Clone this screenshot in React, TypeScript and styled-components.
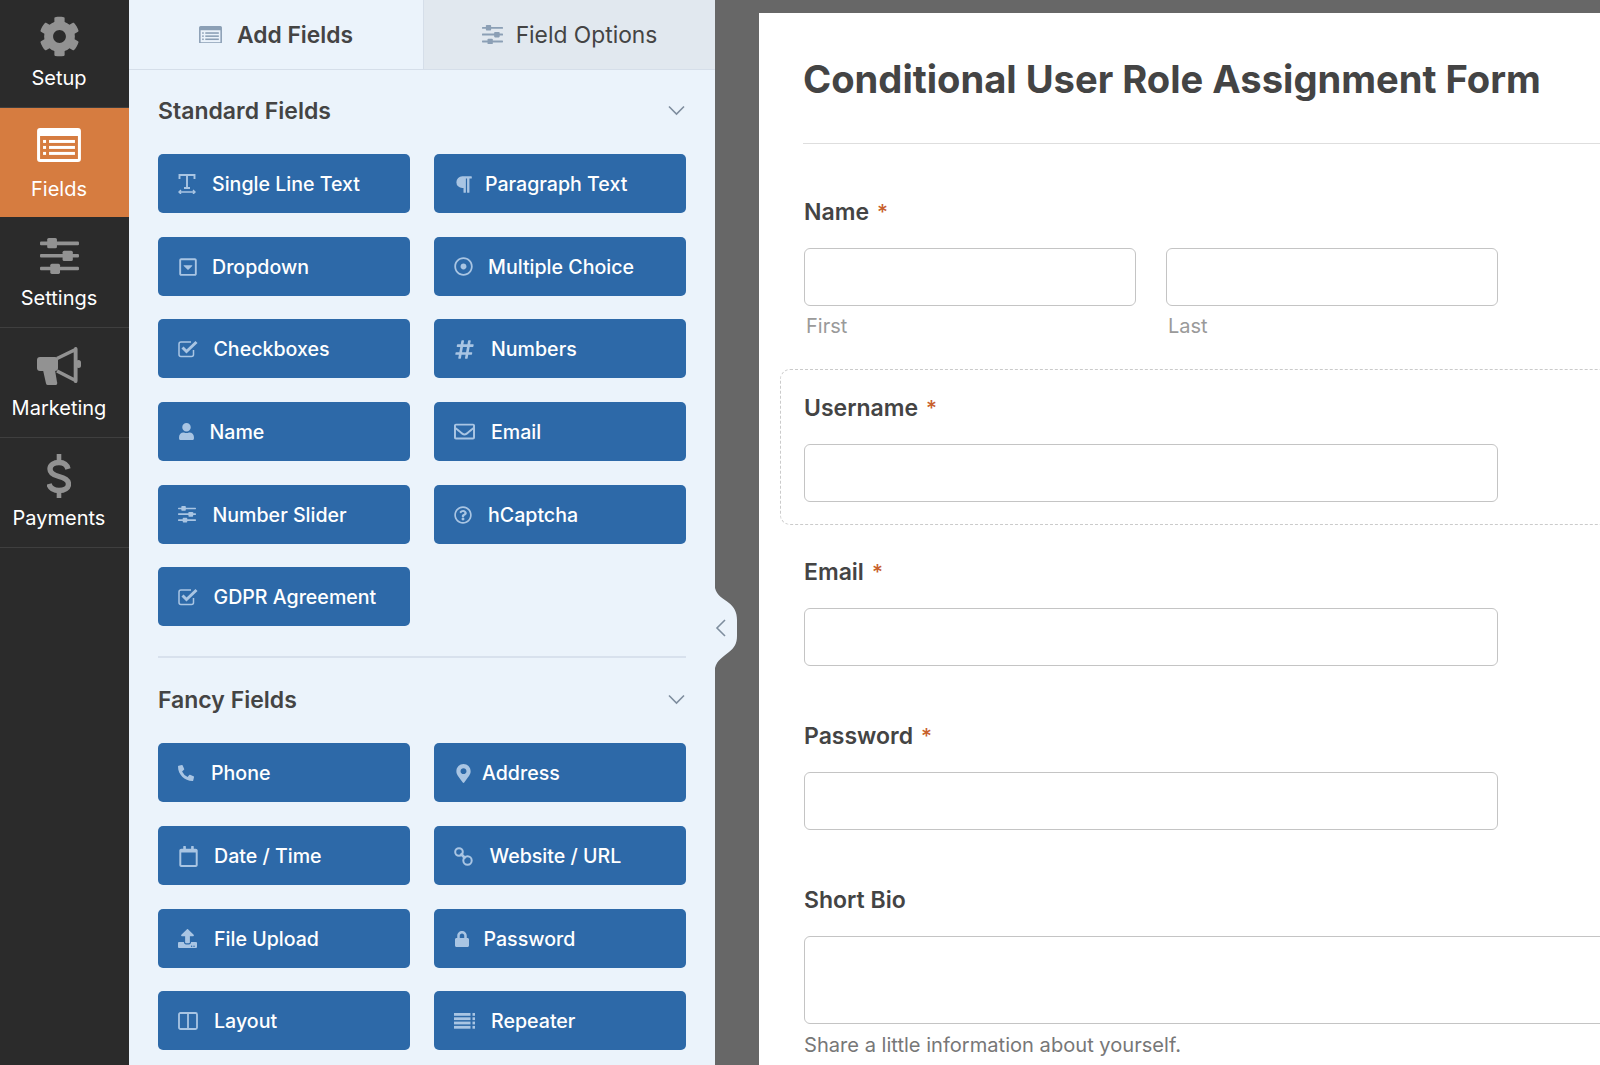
import React from 'react';
import styled, { createGlobalStyle } from 'styled-components';
import {
  FaCog,
  FaHashtag,
  FaLock,
  FaMapMarkerAlt,
  FaParagraph,
  FaPhoneAlt,
  FaRegCalendar,
  FaRegCaretSquareDown,
  FaRegDotCircle,
  FaRegEnvelope,
  FaRegQuestionCircle,
  FaUpload,
  FaUser,
} from 'react-icons/fa';

const GlobalStyle = createGlobalStyle`
  html, body {
    margin: 0;
    height: 100%;
    overflow: hidden;
    font-family: Inter, "Liberation Sans", sans-serif;
  }
  * { box-sizing: border-box; }
`;

const Page = styled.div`
  display: flex;
  width: 1600px;
  height: 1065px;
  overflow: hidden;
`;

const Sidebar = styled.nav`
  flex: 0 0 129px;
  background: #2b2b2b;
`;

const NavItem = styled.div<{ $active?: boolean; $h: number }>`
  display: flex;
  flex-direction: column;
  align-items: center;
  justify-content: flex-end;
  height: ${p => p.$h}px;
  padding: 0 11px ${p => (p.$active ? 15.5 : 17)}px 0;
  gap: ${p => (p.$active ? 9.5 : 8)}px;
  background: ${p => (p.$active ? '#d67c40' : 'transparent')};
  border-bottom: 1px solid ${p => (p.$active ? 'transparent' : '#3f3f3f')};
  color: ${p => (p.$active ? '#fff' : '#929292')};
`;

const NavIconBox = styled.span`
  display: flex;
  align-items: center;
  justify-content: center;
  height: 44px;
`;

const NavLabel = styled.span`
  color: #fff;
  font-size: 20px;
  line-height: 24px;
`;

const Panel = styled.section`
  flex: 0 0 586px;
  background: #ebf3fb;
`;

const Tabs = styled.div`
  display: flex;
  height: 70px;
  border-bottom: 1px solid #d5dee9;
`;

const Tab = styled.div<{ $active?: boolean }>`
  display: flex;
  align-items: center;
  justify-content: center;
  gap: ${p => (p.$active ? '15px' : '13px')};
  flex: 0 0 ${p => (p.$active ? '294px' : '292px')};
  background: ${p => (p.$active ? 'transparent' : '#e1e8ef')};
  border-left: ${p => (p.$active ? 'none' : '1px solid #d5dee9')};
  color: #444;
  font-size: 22.8px;
  font-weight: ${p => (p.$active ? 600 : 400)};
  & > svg { color: #8b9fb5; }
`;

const Section = styled.div<{ $top: number }>`
  padding: ${p => p.$top}px 29px 0;
`;

const SectionHead = styled.div`
  display: flex;
  align-items: center;
  justify-content: space-between;
  height: 24px;
  margin-bottom: 31px;
  color: #444;
  font-size: 23px;
  font-weight: 600;
  & > svg { color: #7e8d9e; margin: -2px 1px 0 0; }
`;

const FieldGrid = styled.div`
  display: grid;
  grid-template-columns: 252px 252px;
  grid-auto-rows: 59.15px;
  column-gap: 24px;
  row-gap: 23.5px;
`;

const FieldButton = styled.div`
  display: flex;
  align-items: center;
  padding: 1px 0 0 20px;
  background: #2d69a8;
  border-radius: 5px;
  color: #fff;
  font-size: 19.6px;
  font-weight: 500;
`;

const FieldIconSlot = styled.span<{ $slot: number }>`
  display: flex;
  align-items: center;
  flex: 0 0 ${p => p.$slot}px;
  color: #a9c5e3;
`;

const Divider = styled.div`
  height: 2px;
  margin-top: 30px;
  background: #d8e1ed;
`;

const Canvas = styled.main`
  position: relative;
  flex: 1;
  min-width: 0;
  padding: 13px 0 0 44px;
  background: #676767;
  overflow: hidden;
`;

const Toggle = styled.div`
  position: absolute;
  left: 0;
  top: 588px;
  width: 22px;
  height: 80px;
  color: #ebf3fb;
  & > svg { display: block; }
`;

const ToggleChevron = styled.span`
  position: absolute;
  left: 0;
  top: 31px;
  color: #7e8d9e;
  & > svg { display: block; }
`;

const Form = styled.div`
  width: 1100px;
  height: 1100px;
  padding: 0 0 0 44px;
  background: #fff;
`;

const FormTitle = styled.h1`
  height: 88px;
  margin: 0;
  padding-top: 41px;
  color: #444;
  font-size: 38.15px;
  font-weight: 700;
  line-height: 50px;
  white-space: nowrap;
`;

const FormRule = styled.div`
  height: 1px;
  margin: 42px 0 29px;
  background: #dedede;
`;

const Block = styled.div<{ $selected?: boolean }>`
  width: 1050px;
  margin: 8px 0 0 -23px;
  padding: 26px 23px 22px;
  border: 1.5px dashed ${p => (p.$selected ? '#cbcbcb' : 'transparent')};
  border-radius: 10px;
`;

const Label = styled.label`
  display: block;
  height: 24px;
  margin-bottom: 24px;
  color: #444;
  font-size: 23px;
  font-weight: 600;
  line-height: 24px;
`;

const Req = styled.span`
  margin-left: 8px;
  color: #c8602c;
  font-size: 21px;
  font-weight: 500;
`;

const InputRow = styled.div`
  display: flex;
  gap: 30px;
`;

const Cell = styled.div`
  display: flex;
  flex-direction: column;
`;

const Input = styled.div<{ $w: number; $h?: number }>`
  width: ${p => p.$w}px;
  height: ${p => p.$h ?? 58}px;
  background: #fff;
  border: 1.5px solid #c4c4c4;
  border-radius: 6px;
`;

const SubLabel = styled.span`
  margin: 10px 0 1.5px;
  padding-left: 2px;
  color: #9a9a9a;
  font-size: 20px;
  line-height: 20px;
`;

const Help = styled.div`
  margin-top: 9px;
  color: #777;
  font-size: 20.1px;
  line-height: 24px;
  white-space: nowrap;
`;

function FieldsIcon({ size }: { size: number }) {
  return (
    <svg width={size} height={size * 0.77} viewBox="0 0 44 34" fill="currentColor">
      <path
        fillRule="evenodd"
        d="M3 0h38a3 3 0 0 1 3 3v28a3 3 0 0 1-3 3H3a3 3 0 0 1-3-3V3a3 3 0 0 1 3-3zM3 8v23h38V8z"
      />
      <rect x="6" y="12" width="3" height="3" />
      <rect x="6" y="18" width="3" height="3" />
      <rect x="6" y="24" width="3" height="3" />
      <rect x="12" y="12" width="26" height="3" />
      <rect x="12" y="18" width="26" height="3" />
      <rect x="12" y="24" width="26" height="3" />
    </svg>
  );
}

function SlidersIcon({ size }: { size: number }) {
  return (
    <svg width={size} height={size * 0.92} viewBox="0 0 38 35" fill="currentColor">
      <rect x="0" y="3.5" width="38" height="3.5" rx="1" />
      <rect x="0" y="15.5" width="38" height="3.5" rx="1" />
      <rect x="0" y="28" width="38" height="3.5" rx="1" />
      <rect x="7" y="0" width="9.5" height="10" rx="1.5" />
      <rect x="22" y="12.5" width="10" height="10" rx="1.5" />
      <rect x="10" y="25" width="9.5" height="10" rx="1.5" />
    </svg>
  );
}

function MegaphoneIcon() {
  return (
    <svg width="44" height="40" viewBox="0 0 44 40" fill="currentColor">
      <rect x="0" y="11" width="21" height="14" rx="3" />
      <path d="M20 12.5L38.5 3.5V34.5L20 25" fill="none" stroke="currentColor" strokeWidth="3.6" strokeLinejoin="round" />
      <rect x="37" y="1" width="3.4" height="36" rx="1.5" />
      <rect x="39" y="14" width="5" height="8" rx="2.5" />
      <path d="M6 24h12l2 12a2 2 0 0 1-2 3h-7a2 2 0 0 1-2-1.5z" />
    </svg>
  );
}

function DollarIcon() {
  return (
    <svg width="24" height="44" viewBox="0 0 24 44" fill="none" stroke="currentColor" strokeWidth="5.4">
      <path d="M21 15c-1-4-4-6.5-9-6.5s-9 2.5-9 6.5 3 6 9 7.5 9.5 3.5 9.5 7.5-4 6.5-9.5 6.5-9-2.5-10-6.5" />
      <path d="M12 0v9M12 36v8" strokeWidth="4.6" />
    </svg>
  );
}

function TextIcon() {
  return (
    <svg width="18" height="20" viewBox="0 0 18 20" fill="none" stroke="currentColor" strokeWidth="1.9">
      <path d="M1.5 5V1h15v4M9 1v13M6 14h6" />
      <path d="M1 18h16M3 16l-2 2 2 2M15 16l2 2-2 2" strokeWidth="1.4" />
    </svg>
  );
}

function CheckIcon() {
  return (
    <svg width="20" height="18" viewBox="0 0 20 18" fill="none" stroke="currentColor">
      <path d="M15.5 10v4.5a2 2 0 0 1-2 2H3a2 2 0 0 1-2-2V4a2 2 0 0 1 2-2h10" strokeWidth="1.5" />
      <path d="M4.5 7.5l4 4L18.5 2" strokeWidth="3" />
    </svg>
  );
}

function LayoutIcon() {
  return (
    <svg width="20" height="18" viewBox="0 0 20 18" fill="none" stroke="currentColor" strokeWidth="1.8">
      <rect x="1" y="1" width="18" height="16" rx="1.5" />
      <path d="M10 1v16" />
    </svg>
  );
}

function RepeaterIcon() {
  return (
    <svg width="21" height="16" viewBox="0 0 21 16" fill="currentColor">
      <rect y="0" width="16.5" height="2.8" />
      <rect y="4.3" width="16.5" height="2.8" />
      <rect y="8.6" width="16.5" height="2.8" />
      <rect y="12.9" width="16.5" height="2.8" />
      <rect x="18.5" y="0" width="2.5" height="2.8" />
      <rect x="18.5" y="4.3" width="2.5" height="2.8" />
      <rect x="18.5" y="8.6" width="2.5" height="2.8" />
      <rect x="18.5" y="12.9" width="2.5" height="2.8" />
    </svg>
  );
}

function LinkIcon() {
  return (
    <svg width="19" height="19" viewBox="0 0 19 19" fill="none" stroke="currentColor" strokeWidth="2">
      <circle cx="5" cy="5" r="3.8" />
      <circle cx="13.5" cy="13.5" r="4.2" />
      <path d="M6.5 6.5l5 5" strokeWidth="2.6" />
    </svg>
  );
}

function Chevron({ dir = 'down' }: { dir?: 'down' | 'left' }) {
  if (dir === 'left') {
    return (
      <svg width="11" height="18" viewBox="0 0 11 18" fill="none" stroke="currentColor" strokeWidth="1.6">
        <path d="M10 1L2 9l8 8" />
      </svg>
    );
  }
  return (
    <svg width="17" height="11" viewBox="0 0 17 11" fill="none" stroke="currentColor" strokeWidth="1.6">
      <path d="M1 1.5l7.5 7.5L16 1.5" />
    </svg>
  );
}

type Field = { label: string; slot: number; icon: React.ReactNode };

const standardFields: Field[] = [
  { label: 'Single Line Text', slot: 34, icon: <TextIcon /> },
  { label: 'Paragraph Text', slot: 31, icon: <FaParagraph size={19} /> },
  { label: 'Dropdown', slot: 34, icon: <FaRegCaretSquareDown size={20} /> },
  { label: 'Multiple Choice', slot: 34, icon: <FaRegDotCircle size={19} /> },
  { label: 'Checkboxes', slot: 35.5, icon: <CheckIcon /> },
  { label: 'Numbers', slot: 37, icon: <FaHashtag size={21} /> },
  { label: 'Name', slot: 31.5, icon: <FaUser size={17} /> },
  { label: 'Email', slot: 37, icon: <FaRegEnvelope size={21} /> },
  { label: 'Number Slider', slot: 34.5, icon: <SlidersIcon size={18} /> },
  { label: 'hCaptcha', slot: 34, icon: <FaRegQuestionCircle size={18} /> },
  { label: 'GDPR Agreement', slot: 35.5, icon: <CheckIcon /> },
];

const fancyFields: Field[] = [
  { label: 'Phone', slot: 33, icon: <FaPhoneAlt size={16} /> },
  { label: 'Address', slot: 28, icon: <FaMapMarkerAlt size={19} /> },
  { label: 'Date / Time', slot: 36, icon: <FaRegCalendar size={21} /> },
  { label: 'Website / URL', slot: 35.5, icon: <LinkIcon /> },
  { label: 'File Upload', slot: 36, icon: <FaUpload size={19} /> },
  { label: 'Password', slot: 29.5, icon: <FaLock size={16} /> },
  { label: 'Layout', slot: 36, icon: <LayoutIcon /> },
  { label: 'Repeater', slot: 37, icon: <RepeaterIcon /> },
];

function FieldList({ fields }: { fields: Field[] }) {
  return (
    <FieldGrid>
      {fields.map(f => (
        <FieldButton key={f.label}>
          <FieldIconSlot $slot={f.slot}>{f.icon}</FieldIconSlot>
          {f.label}
        </FieldButton>
      ))}
    </FieldGrid>
  );
}

function App() {
  return (
    <Page>
      <GlobalStyle />
      <Sidebar>
        <NavItem $h={108}>
          <NavIconBox><FaCog size={41} /></NavIconBox>
          <NavLabel>Setup</NavLabel>
        </NavItem>
        <NavItem $active $h={109}>
          <NavIconBox><FieldsIcon size={44} /></NavIconBox>
          <NavLabel>Fields</NavLabel>
        </NavItem>
        <NavItem $h={111}>
          <NavIconBox><SlidersIcon size={39} /></NavIconBox>
          <NavLabel>Settings</NavLabel>
        </NavItem>
        <NavItem $h={110}>
          <NavIconBox><MegaphoneIcon /></NavIconBox>
          <NavLabel>Marketing</NavLabel>
        </NavItem>
        <NavItem $h={110}>
          <NavIconBox><DollarIcon /></NavIconBox>
          <NavLabel>Payments</NavLabel>
        </NavItem>
      </Sidebar>

      <Panel>
        <Tabs>
          <Tab $active>
            <FieldsIcon size={23} />
            Add Fields
          </Tab>
          <Tab>
            <SlidersIcon size={21} />
            Field Options
          </Tab>
        </Tabs>
        <Section $top={29}>
          <SectionHead>
            Standard Fields
            <Chevron />
          </SectionHead>
          <FieldList fields={standardFields} />
          <Divider />
        </Section>
        <Section $top={30}>
          <SectionHead>
            Fancy Fields
            <Chevron />
          </SectionHead>
          <FieldList fields={fancyFields} />
        </Section>
      </Panel>

      <Canvas>
        <Toggle>
          <svg width="22" height="80" viewBox="0 0 22 80" fill="currentColor">
            <path d="M0 0C2 8 8 10 14 15C19 19 22 24 22 32V48C22 56 19 60 14 64C8 69 2 72 0 80Z" />
          </svg>
          <ToggleChevron><Chevron dir="left" /></ToggleChevron>
        </Toggle>
        <Form>
          <FormTitle>Conditional User Role Assignment Form</FormTitle>
          <FormRule />
          <Block>
            <Label>Name<Req>*</Req></Label>
            <InputRow>
              <Cell>
                <Input $w={332} />
                <SubLabel>First</SubLabel>
              </Cell>
              <Cell>
                <Input $w={332} />
                <SubLabel>Last</SubLabel>
              </Cell>
            </InputRow>
          </Block>
          <Block $selected>
            <Label>Username<Req>*</Req></Label>
            <Input $w={694} />
          </Block>
          <Block>
            <Label>Email<Req>*</Req></Label>
            <Input $w={694} />
          </Block>
          <Block>
            <Label>Password<Req>*</Req></Label>
            <Input $w={694} />
          </Block>
          <Block>
            <Label>Short Bio</Label>
            <Input $w={1000} $h={88} />
            <Help>Share a little information about yourself.</Help>
          </Block>
        </Form>
      </Canvas>
    </Page>
  );
}

export default App;
